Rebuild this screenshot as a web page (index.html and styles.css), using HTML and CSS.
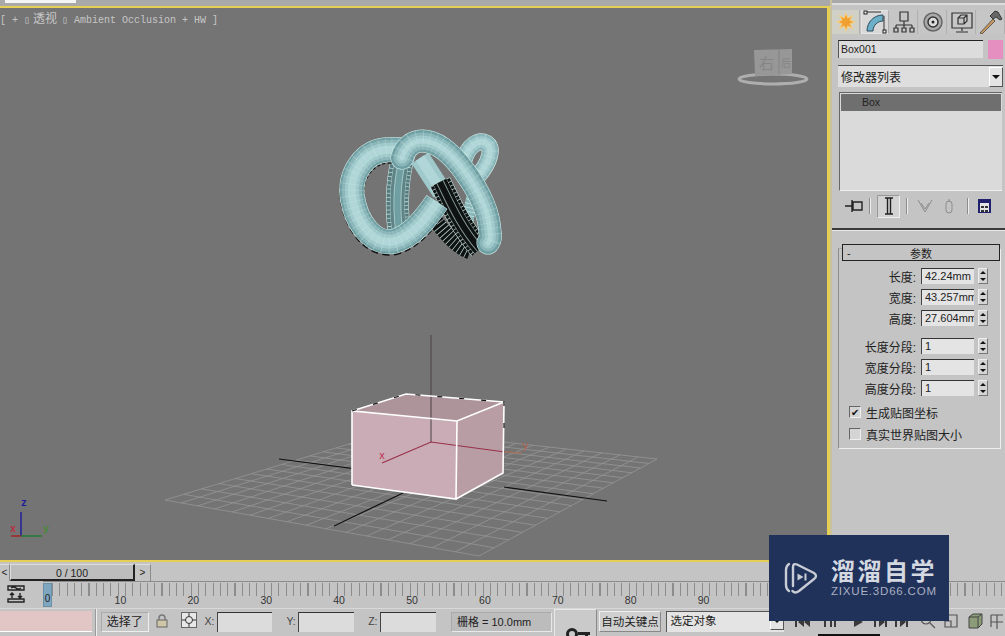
FILE: index.html
```html
<!DOCTYPE html>
<html lang="zh">
<head>
<meta charset="utf-8">
<title>3ds Max</title>
<link rel="stylesheet" href="styles.css">
</head>
<body>
<div class="app">
  <div class="main">
    <div class="viewport">
      <div class="vp-label">[ + ▯ <span class="vp-cn">透视</span> ▯ Ambient Occlusion + HW ]</div>
      <svg class="scene" viewBox="0 8 827 552" width="827" height="552">
        <defs>
          <path id="t1" d="M464 160C468 146 478 139 486 143C494 148 490 162 478 176"/>
          <path id="tm" d="M405 150C396 180 396 205 399 230"/>
          <path id="tt" d="M474 192C470 205 468 216 466 232"/>
          <path id="tp" d="M420 158L442 192"/>
          <path id="td" d="M440 182C450 202 460 226 480 249"/>
          <path id="te" d="M430 214C444 232 455 246 470 252"/>
          <path id="tl" d="M437 202C425 220 412 236 395 241C375 246 356 225 352 195C350 172 365 152 385 150C395 149 402 149 412 152"/>
          <path id="tf" d="M402 158C405 148 412 141 422 141C440 141 455 158 465 172C478 190 489 212 490 232C491 238 490 241 488 243"/>
        </defs>
        <g id="grid" class="grid"></g>
        <line class="axis" x1="279" y1="459" x2="352" y2="468.400"/>
        <line class="axis" x1="504" y1="487" x2="607" y2="501"/>
        <line class="axis" x1="334" y1="526" x2="403" y2="493"/>
        <polygon class="box-top" points="352,411 406,394 504,402 457,421"/>
        <polygon class="box-right" points="457,421 504,402 503,473 456,499"/>
        <polygon class="box-front" points="352,411 457,421 456,499 352,485"/>
        <line class="pivot" x1="431" y1="335" x2="431" y2="442"/>
        <polyline class="gizmo" points="382,463 431,442 505,452"/>
        <line class="gizmo-tip" x1="505" y1="452" x2="522" y2="453"/>
        <text class="gizmo-x" x="379" y="459">x</text>
        <text class="gizmo-y" x="522" y="449">y</text>
        <polyline class="box-wire" points="352,485 352,411 457,421 504,402"/>
        <polyline class="box-wire" points="457,421 456,499 352,485"/>
        <polyline class="box-wire" points="456,499 503,473 504,402"/>
        <polyline class="box-back" points="352,411 406,394 504,402"/>
        <polyline class="box-back-dash" points="352,411 406,394 504,402 504,430"/>
        <g class="knot">
          <use href="#t1" class="s-17 wire"/><use href="#t1" class="s-16 c1"/><use href="#t1" class="s-11 c2"/><use href="#t1" class="s-6 c3"/><use href="#t1" class="s-16 ring"/>
          <use href="#tt" class="s-12 c1"/><use href="#tt" class="s-12 ring-dense"/>
          <use href="#tm" class="s-23 wire"/><use href="#tm" class="s-22 cm"/><use href="#tm" class="s-12 c0"/><use href="#tm" class="s-22 ring-dense"/><use href="#tm" class="s-15 long"/><use href="#tm" class="s-14 cm-thin"/><use href="#tm" class="s-8 long"/><use href="#tm" class="s-6 c0-soft"/>
          <use href="#tp" class="s-20 c2"/><use href="#tp" class="s-10 c3"/>
          <use href="#te" class="s-15 dark"/><use href="#te" class="s-15 ring-dense"/>
          <use href="#td" class="s-22 wire"/><use href="#td" class="s-21 dark"/><use href="#td" class="s-21 ring-dense"/><use href="#td" class="s-15 long"/><use href="#td" class="s-14 dark-thin"/><use href="#td" class="s-8 long"/><use href="#td" class="s-6 dark-thin"/>
          <use href="#tl" class="s-25 edge" transform="translate(0 1.500)"/>
          <use href="#tl" class="s-25 wire"/><use href="#tl" class="s-24 c0"/><use href="#tl" class="s-20 c1"/><use href="#tl" class="s-14 c2"/><use href="#tl" class="s-8 c3"/><use href="#tl" class="s-24 ring"/>
          <use href="#tf" class="s-23 wire round"/><use href="#tf" class="s-22 c0 round"/><use href="#tf" class="s-17 c1 round"/><use href="#tf" class="s-11 c2 round"/><use href="#tf" class="s-5 c3 round"/><use href="#tf" class="s-22 ring"/>
        </g>
        <ellipse class="cube-ring" cx="773" cy="79" rx="34" ry="5"/>
        <polygon class="cube-face" points="754,50 792,49 792,74 755,76"/>
        <line class="cube-edge" x1="779" y1="49" x2="779" y2="75"/>
        <text class="cube-text" x="759" y="69">右</text>
        <text class="cube-text small" x="781" y="67">后</text>
        <line class="tri-z" x1="21" y1="536" x2="21" y2="512"/>
        <line class="tri-x" x1="11" y1="536" x2="21" y2="536"/>
        <line class="tri-y" x1="21" y1="536" x2="42" y2="536"/>
        <text class="tri-label z" x="21" y="506">z</text>
        <text class="tri-label x" x="10" y="532">x</text>
        <text class="tri-label y" x="43" y="532">y</text>
      </svg>
    </div>
    <aside class="panel">
      <div class="tabs">
        <div class="tab">
          <svg viewBox="0 0 20 20" width="20" height="20"><path class="sun" d="M10 1l1.800 5 4.700-2.500-2.500 4.700 5 1.800-5 1.800 2.500 4.700-4.700-2.500-1.800 5-1.800-5-4.700 2.500 2.500-4.700-5-1.800 5-1.800-2.500-4.700 4.700 2.500z"/></svg>
        </div>
        <div class="tab tab-on">
          <svg viewBox="0 0 24 24" width="24" height="24"><path class="arc" d="M4 21C4 12 11 5 20 5V11C15 11 10 15 10 21Z"/><path class="arc-line" d="M2 2H18M21 6V21"/><rect class="node" x="1" y="1" width="3" height="3"/><rect class="node" x="20" y="20" width="3" height="3"/></svg>
        </div>
        <div class="tab">
          <svg viewBox="0 0 24 24" width="24" height="24"><path class="ico-line" d="M8 2h8v9H8zM12 11v4M4 15h16M4 15v3M12 15v3M20 15v3M2 18h4v4H2zM10 18h4v4h-4zM18 18h4v4h-4z"/></svg>
        </div>
        <div class="tab">
          <svg viewBox="0 0 24 24" width="24" height="24"><circle class="ring-a" cx="12" cy="12" r="9"/><circle class="ring-b" cx="12" cy="12" r="5"/><circle class="ring-c" cx="12" cy="12" r="1.500"/></svg>
        </div>
        <div class="tab">
          <svg viewBox="0 0 24 24" width="24" height="24"><path class="ico-line" d="M2 3h20v15H2zM12 18v3M6 22h12M8 8l3-3h6v6l-3 3H8zM8 8h6v6M14 8l3-3"/></svg>
        </div>
        <div class="tab">
          <svg viewBox="0 0 24 24" width="24" height="24"><path class="handle" d="M1 23L14 9l2 2L3 24z"/><path class="hammer" d="M11 6l5-5 3 1 4 7-2 1-4-3-3 2z"/></svg>
        </div>
      </div>
      <div class="name-row">
        <div class="name-input">Box001</div>
        <div class="swatch"></div>
      </div>
      <div class="mod-select">
        <span>修改器列表</span>
        <span class="drop-btn"><i class="tri"></i></span>
      </div>
      <div class="stack">
        <div class="stack-row">Box</div>
      </div>
      <div class="stack-tools">
        <svg class="t-pin" viewBox="0 0 18 14" width="18" height="14"><path class="ico-dark" d="M0 7h7M7 1v12M8 3h9v8H8z"/></svg>
        <span class="t-sep"></span>
        <span class="t-active"><svg viewBox="0 0 10 18" width="10" height="18"><path class="ico-dark" d="M1 1h8M1 17h8M3.500 1v16M6.500 1v16"/></svg></span>
        <span class="t-sep"></span>
        <svg class="t-dim" viewBox="0 0 16 16" width="16" height="16"><path class="ico-dim" d="M1 2l7 12 7-12M4 5l4 6 4-6"/></svg>
        <svg class="t-dim2" viewBox="0 0 12 16" width="12" height="16"><path class="ico-dim" d="M6 1v3M3 6a3 3 0 016 0v6a3 3 0 01-6 0z"/></svg>
        <span class="t-sep last"></span>
        <svg class="t-cfg" viewBox="0 0 16 16" width="16" height="16"><path class="cfg-a" d="M1 1h13v14H1z"/><path class="cfg-b" d="M3 5h9v9H3z"/><path class="cfg-c" d="M8 8h3v2H8zM8 12h3v2H8zM4 8h3v2H4zM4 12h3v2H4z"/></svg>
      </div>
      <div class="rule"></div>
      <div class="rollup">
        <div class="roll-head"><span class="roll-minus">-</span><span class="roll-title">参数</span></div>
        <div class="fields">
          <div class="field"><label>长度:</label><span class="num">42.24mm</span><span class="spin"><i></i><i></i></span></div>
          <div class="field"><label>宽度:</label><span class="num">43.257mm</span><span class="spin"><i></i><i></i></span></div>
          <div class="field"><label>高度:</label><span class="num">27.604mm</span><span class="spin"><i></i><i></i></span></div>
        </div>
        <div class="fields second">
          <div class="field"><label>长度分段:</label><span class="num">1</span><span class="spin"><i></i><i></i></span></div>
          <div class="field"><label>宽度分段:</label><span class="num">1</span><span class="spin"><i></i><i></i></span></div>
          <div class="field"><label>高度分段:</label><span class="num">1</span><span class="spin"><i></i><i></i></span></div>
        </div>
        <div class="check"><span class="box checked">✔</span>生成贴图坐标</div>
        <div class="check lower"><span class="box"></span>真实世界贴图大小</div>
      </div>
    </aside>
  </div>
  <div class="bottom">
    <div class="slider-row">
      <span class="arrow-btn">&lt;</span>
      <span class="slider">0 / 100</span>
      <span class="arrow-btn wide">&gt;</span>
    </div>
    <div class="track-row">
      <svg class="curve-ico" viewBox="0 0 18 18" width="18" height="18"><path class="ico-dark" d="M1 1h16v4H1zM1 14h16v3H1zM5 13V8M3 10l2-2 2 2M13 8v5M11 11l2 2 2-2M4 3q3-2 5 0t5 0"/></svg>
      <div class="ruler">
        <div class="ticks"></div>
        <span class="frame">0</span>
        <div class="nums">
          <span>10</span><span>20</span><span>30</span><span>40</span><span>50</span><span>60</span><span>70</span><span>80</span><span>90</span>
        </div>
      </div>
    </div>
    <div class="status-row">
      <div class="pink"></div>
      <div class="divider"></div>
      <div class="sel-btn">选择了</div>
      <svg class="lock" viewBox="0 0 12 14" width="12" height="14"><path class="lock-arc" d="M3 6V4a3 3 0 016 0v2"/><rect class="lock-body" x="1" y="6" width="10" height="7"/></svg>
      <svg class="target" viewBox="0 0 16 16" width="16" height="16"><rect class="target-bg" x="0.500" y="0.500" width="15" height="15"/><circle class="target-c" cx="8" cy="8" r="3.500"/><path class="target-c" d="M8 1v3.500M8 11.500V15M1 8h3.500M11.500 8H15"/></svg>
      <span class="xyz first">X:</span><span class="coord"></span>
      <span class="xyz">Y:</span><span class="coord"></span>
      <span class="xyz">Z:</span><span class="coord"></span>
      <div class="grid-box">栅格 = 10.0mm</div>
      <div class="key-btn"><svg viewBox="0 0 26 14" width="26" height="14"><path class="key" d="M8 1a6 6 0 100 12A6 6 0 008 1zM8 4a3 3 0 110 6 3 3 0 010-6zM14 5h12v3h-2v3h-3V8h-7z"/></svg></div>
      <div class="auto-btn">自动关键点</div>
      <div class="sel-drop"><span>选定对象</span><span class="drop-btn small"><i class="tri"></i></span></div>
      <svg class="play" viewBox="0 0 116 14" width="116" height="14">
        <path class="play-i" d="M1 2h2v10H1zM10 2L4 7l6 5zM16 2l-6 5 6 5zM30 2h2v10h-2zM36 2h2v10h-2zM40 2h2v10h-2zM60 2l9 5-9 5zM80 2h2v10h-2zM85 2l6 5-6 5zM91 2h2v10h-2zM101 2h2v10h-2zM106 2l6 5-6 5zM112 2h2v10h-2z"/>
      </svg>
      <svg class="nav" viewBox="0 0 86 18" width="86" height="18">
        <circle class="nav-l" cx="7" cy="7" r="5"/><path class="nav-l" d="M11 11l5 5M26 3h12v12H26zM26 9h6v6"/>
        <path class="nav-g" d="M50 5l4-3h9v10l-4 4h-9zM50 5h9v11M59 5l4-3"/>
        <path class="nav-l" d="M72 3h12M72 3v12M78 3v14M72 10h12"/>
      </svg>
    </div>
  </div>
  <div class="time-strip"></div>
  <div class="watermark">
    <svg class="wm-logo" viewBox="0 0 34 34" width="34" height="34">
      <path class="wm-stroke" d="M5 3Q2 5 2 9V24Q2 28 5 30"/>
      <path class="wm-stroke" d="M9 25V6Q9 2 13 3.500L30 12Q34 15 30 18L15 30Q11 33 8.500 30"/>
      <path class="wm-fill" d="M13.500 12.500l6 3.500-6 3.500zM20.500 12.500h2v7h-2z"/>
    </svg>
    <div class="wm-text">
      <div class="wm-cn">溜溜自学</div>
      <div class="wm-en">ZIXUE.3D66.COM</div>
    </div>
  </div>
</div>
<script src="grid.js"></script>
</body>
</html>
```

FILE: styles.css
```css
* { box-sizing: border-box; }
html, body { margin: 0; padding: 0; }
body { background: #c4c4c4; font-family: "Liberation Sans", "Noto Sans CJK SC", sans-serif; color: #222; }
.app { position: relative; width: 1005px; height: 636px; overflow: hidden; display: flex; flex-direction: column; background: #c4c4c4; }
.main { display: flex; height: 562px; flex: none; }

/* viewport */
.viewport { position: relative; width: 830px; height: 556px; margin-top: 6px; background: #747474; border-top: 2px solid #e6cf55; border-right: 3px solid #e6cf55; border-bottom: 2px solid #e6cf55; box-shadow: 0 -6px 0 #a9a9a9; }
.viewport::before { content: ""; position: absolute; left: 5px; top: -8px; width: 71px; height: 3px; background: #f4f4f4; }
.vp-label { position: absolute; left: 0; top: 1px; font: 10px "Liberation Mono", "Noto Sans CJK SC", monospace; color: #c6c6c6; white-space: pre; }
.vp-cn { font-size: 12px; margin: 0 -1px 0 -3px; }
.scene { display: block; }
.grid line { stroke: #969696; stroke-width: 0.8; }
.axis { stroke: #111; stroke-width: 1.2; }
.box-top { fill: #ad939a; }
.box-right { fill: #b89da4; }
.box-front { fill: #c9acb5; }
.box-wire { fill: none; stroke: #fff; stroke-width: 1.6; }
.box-back { fill: none; stroke: #fff; stroke-width: 1.4; }
.box-back-dash { fill: none; stroke: #111; stroke-width: 1.2; stroke-dasharray: 5 17; }
.pivot { stroke: #4c4146; stroke-width: 1; }
.gizmo { fill: none; stroke: #99304a; stroke-width: 1.2; }
.gizmo-tip { stroke: #a0705c; stroke-width: 1.4; }
.gizmo-x { font: 10px "Liberation Mono", monospace; fill: #c02a4a; }
.gizmo-y { font: 11px "Liberation Mono", monospace; fill: #b0604a; }
.knot { filter: blur(0.4px); }
.knot use { fill: none; stroke-linecap: butt; }
.knot use.round { stroke-linecap: round; }
.s-25 { stroke-width: 25; } .s-24 { stroke-width: 24; } .s-23 { stroke-width: 23; } .s-22 { stroke-width: 22; } .s-21 { stroke-width: 21; }
.s-20 { stroke-width: 20; } .s-17 { stroke-width: 17; } .s-16 { stroke-width: 16; }
.s-15 { stroke-width: 15; } .s-14 { stroke-width: 14; } .s-12 { stroke-width: 12; }
.s-11 { stroke-width: 11; } .s-10 { stroke-width: 10; } .s-8 { stroke-width: 8; } .s-6 { stroke-width: 6; } .s-5 { stroke-width: 5; }
.wire { stroke: #d7f2ee; }
.edge { stroke: #111; stroke-dasharray: 5 3; }
.c0 { stroke: #6f9fa3; }
.c1 { stroke: #8ab6b9; }
.c2 { stroke: #9fc9cb; }
.c3 { stroke: #b0d6d7; }
.cm { stroke: #55797c; }
.cm-thin { stroke: #5e8487; }
.c0-soft { stroke: #6f9fa3; }
.dark { stroke: #0e1212; }
.dark-thin { stroke: #0e1212; }
.ring { stroke: #d7f2ee; stroke-opacity: 0.28; stroke-dasharray: 0.8 5; }
.ring-dense { stroke: #d4f0ea; stroke-opacity: 0.8; stroke-dasharray: 0.8 3.200; }
.long { stroke: #d4f0ea; stroke-opacity: 0.6; }
.cube-ring { fill: none; stroke: #aeaeae; stroke-width: 3; }
.cube-face { fill: #979797; }
.cube-edge { stroke: #838383; stroke-width: 1; }
.cube-text { font: 15px "Noto Sans CJK SC", sans-serif; fill: #858585; }
.cube-text.small { font-size: 10px; }
.tri-z { stroke: #1c1c9c; stroke-width: 1.4; }
.tri-x { stroke: #a82020; stroke-width: 1.4; }
.tri-y { stroke: #1c7c2c; stroke-width: 1.4; }
.tri-label { font: bold 10px "Liberation Mono", monospace; }
.tri-label.z { fill: #1c1c9c; }
.tri-label.x { fill: #b83040; }
.tri-label.y { fill: #4a8a3a; }

/* command panel */
.panel { width: 175px; height: 562px; padding-top: 10px; background: #c4c4c4; border-left: 2px solid #c9c29c; box-shadow: inset 0 3px 0 #a9a9a9, inset 0 5px 0 #dcdcdc; }
.tabs { display: flex; height: 24px; padding-left: 0; gap: 1px; }
.tab { width: 28px; height: 24px; display: flex; align-items: center; justify-content: center; border-right: 1px solid #b0b0b0; background: #c6c6c6; }
.tab:first-child { background: #d0d0c6; }
.tab-on { background: #d8d8d8; border: 1px solid #e4e4e4; border-right-color: #aaa; }
.sun { fill: #f0a030; stroke: #f8d080; stroke-width: 1; }
.arc { fill: #6cb0c8; stroke: #2a4a60; stroke-width: 1; }
.arc-line { fill: none; stroke: #333; stroke-width: 1; }
.node { fill: #eee; stroke: #222; stroke-width: 1; }
.ico-line { fill: none; stroke: #333; stroke-width: 1.2; }
.ring-a { fill: #aaa; stroke: #666; stroke-width: 1.5; }
.ring-b { fill: #ddd; stroke: #333; stroke-width: 1.5; }
.ring-c { fill: #222; }
.handle { fill: #c89860; stroke: #444; stroke-width: 0.8; }
.hammer { fill: #666; stroke: #222; stroke-width: 0.8; }
.name-row { display: flex; margin: 6px 0 0 6px; gap: 5px; }
.name-input { width: 145px; height: 18px; padding: 2px 0 0 2px; font-size: 10.5px; background: #dcdcdc; border-top: 1px solid #222; border-left: 1px solid #555; }
.swatch { width: 15px; height: 19px; background: #e48fc0; }
.mod-select { display: flex; justify-content: space-between; align-items: center; width: 165px; height: 22px; margin: 6px 0 0 6px; padding-left: 3px; font-size: 12px; background: #dedede; border-top: 1px solid #555; }
.drop-btn { width: 14px; height: 20px; display: flex; align-items: center; justify-content: center; background: #e4e4e4; border: 1px solid #fff; border-right-color: #555; border-bottom-color: #555; }
.tri { width: 0; height: 0; border-left: 4px solid transparent; border-right: 4px solid transparent; border-top: 4px solid #111; }
.stack { width: 163px; height: 99px; margin: 5px 0 0 7px; padding: 1px; background: #dadada; border-left: 1px solid #666; border-top: 1px solid #666; border-bottom: 1px solid #f0f0f0; }
.stack-row { height: 17px; padding: 2px 0 0 21px; font-size: 10.5px; color: #222; background: #6f6f6f; }
.stack-tools { display: flex; align-items: center; height: 24px; margin-top: 3px; padding-left: 13px; }
.t-sep { width: 2px; height: 16px; margin: 0 6px; background: #8c8c8c; border-right: 1px solid #eee; }
.t-sep.last { margin: 0 8px 0 12px; }
.t-active { width: 23px; height: 23px; display: flex; align-items: center; justify-content: center; background: #d2d2d2; border: 1px solid #eee; border-color: #999 #eee #eee #999; }
.t-dim { margin-left: 3px; }
.t-dim2 { margin-left: 10px; }
.ico-dark { fill: none; stroke: #222; stroke-width: 1.4; }
.ico-dim { fill: none; stroke: #8c8c8c; stroke-width: 1; }
.cfg-a { fill: #20206c; }
.cfg-b { fill: #e4e4e4; }
.cfg-c { fill: #333; }
.rule { height: 3px; margin-top: 10px; background: #3a3a3a; border-bottom: 1px solid #e8e8e8; }
.rollup { position: relative; width: 163px; height: 201px; margin: 17px 0 0 6px; padding-top: 15px; border: 1px solid #8c8c8c; border-top: 1px solid #aaa; border-right-color: #eee; border-bottom-color: #eee; }
.roll-head { position: absolute; left: 3px; top: -5px; width: 158px; height: 17px; display: flex; align-items: center; font-size: 11px; background: #c4c4c4; border: 1px solid #222; }
.roll-minus { width: 12px; padding-left: 4px; }
.roll-title { flex: 1; text-align: center; padding-right: 12px; }
.fields { margin-top: 4px; display: flex; flex-direction: column; gap: 5px; }
.fields.second { margin-top: 12px; }
.field { display: flex; align-items: center; height: 16px; }
.field label { width: 77px; text-align: right; font-size: 12px; white-space: nowrap; }
.num { width: 53px; height: 16px; margin-left: 5px; padding: 1px 0 0 3px; overflow: hidden; font-size: 11px; white-space: nowrap; background: #e4e4e4; border-top: 1px solid #333; border-left: 1px solid #444; }
.spin { width: 10px; height: 16px; margin-left: 4px; display: flex; flex-direction: column; align-items: center; justify-content: space-around; background: #d4d4d4; border: 1px solid #eee; border-right-color: #777; border-bottom-color: #777; }
.spin i { width: 0; height: 0; border-left: 3px solid transparent; border-right: 3px solid transparent; border-bottom: 3px solid #111; }
.spin i + i { border-bottom: 0; border-top: 3px solid #111; }
.check { display: flex; align-items: center; height: 14px; margin: 9px 0 0 10px; font-size: 12px; white-space: nowrap; }
.check.lower { margin-top: 8px; }
.box { width: 12px; height: 12px; margin-right: 5px; display: flex; align-items: center; justify-content: center; font-size: 10px; color: #111; background: #d4d4d4; border: 1px solid #eee; border-color: #666 #eee #eee #666; }

/* bottom */
.bottom { flex: none; height: 74px; border-top: 0; }
.slider-row { display: flex; height: 19px; padding-top: 2px; }
.arrow-btn { width: 10px; height: 17px; text-align: center; font-size: 10px; line-height: 16px; border-right: 1px solid #8a8a8a; border-top: 1px solid #ddd; }
.arrow-btn.wide { width: 16px; }
.slider { width: 125px; height: 17px; text-align: center; font-size: 10.5px; line-height: 16px; background: #bdbdbd; border: 1px solid #ddd; border-right: 2px solid #222; border-bottom: 2px solid #222; }
.track-row { display: flex; height: 27px; }
.curve-ico { margin: 4px 0 0 7px; flex: none; }
.ruler { position: relative; flex: 1; margin-left: 18px; border-top: 1px solid #8a8a8a; }
.ticks { position: absolute; left: 9px; top: 1px; right: 0; height: 13px; background: repeating-linear-gradient(90deg, #8c8c8c 0 1px, transparent 1px 7.300px); }
.frame { position: absolute; left: 0; top: 1px; width: 9px; height: 24px; padding-top: 9px; text-align: center; font-size: 10px; background: #7fa6bf; border: 1px solid #6b90aa; }
.nums { position: absolute; left: 41px; top: 12px; display: flex; }
.nums span { flex: 0 0 72.900px; width: 72.900px; text-align: center; font-size: 10.500px; color: #333; }
.status-row { display: flex; align-items: flex-start; height: 28px; overflow: hidden; border-top: 1px solid #d8d8d8; }
.pink { width: 92px; height: 21px; margin-top: 2px; background: #e2c5c5; border-bottom: 1px solid #fff; }
.divider { width: 2px; height: 27px; margin-left: 3px; background: #999; border-right: 1px solid #eee; }
.sel-btn { width: 48px; height: 20px; margin: 3px 0 0 4px; text-align: center; font-size: 12px; line-height: 18px; background: #c8c8c8; border: 1px solid #aaa; border-right-color: #eee; border-bottom-color: #eee; }
.lock { margin: 5px 0 0 7px; flex: none; }
.lock-arc { fill: none; stroke: #777; stroke-width: 1.4; }
.lock-body { fill: #cfc6a8; stroke: #666; stroke-width: 1; }
.target { margin: 3px 0 0 13px; flex: none; }
.target-bg { fill: #e8e8e8; stroke: #666; }
.target-c { fill: none; stroke: #333; stroke-width: 1; }
.xyz { width: 12px; margin: 6px 0 0 14px; font-size: 10.500px; color: #444; }
.xyz.first { margin-left: 8px; }
.coord { width: 56px; height: 20px; margin-top: 3px; background: #dcdcdc; border-top: 1px solid #333; border-left: 1px solid #444; }
.grid-box { width: 101px; height: 20px; margin: 3px 0 0 15px; padding-left: 5px; font-size: 11px; line-height: 18px; white-space: nowrap; background: #bcbcbc; border: 1px solid #aaa; border-right-color: #e8e8e8; border-bottom-color: #e8e8e8; }
.key-btn { width: 43px; height: 28px; margin-left: 2px; padding: 17px 0 0 9px; background: #cacaca; border: 1px solid #e8e8e8; border-right-color: #888; }
.key { fill: #222; fill-rule: evenodd; }
.auto-btn { width: 63px; height: 21px; margin: 2px 0 0 2px; text-align: center; font-size: 11.500px; line-height: 20px; white-space: nowrap; background: #d0d0d0; border: 1px solid #eee; border-right-color: #888; border-bottom-color: #888; }
.sel-drop { display: flex; justify-content: space-between; width: 118px; height: 21px; margin: 2px 0 0 5px; padding-left: 3px; font-size: 11.500px; line-height: 19px; background: #e4e4e4; border-top: 1px solid #555; border-left: 1px solid #555; }
.drop-btn.small { height: 18px; }
.play { margin: 6px 0 0 10px; flex: none; }
.play-i { fill: #3a3a3a; }
.nav { margin: 3px 0 0 9px; flex: none; }
.nav-l { fill: none; stroke: #555; stroke-width: 1.200; }
.nav-g { fill: #8c9c78; stroke: #444; stroke-width: 1; }

/* overlays */
.time-strip { position: absolute; left: 818px; top: 634px; width: 62px; height: 2px; background: #111; }
.watermark { position: absolute; left: 769px; top: 535px; width: 180px; height: 86px; display: flex; align-items: center; padding-left: 15px; gap: 13px; background: #20315a; }
.wm-stroke { fill: none; stroke: #c8ccd4; stroke-width: 2.400; stroke-linejoin: round; stroke-linecap: round; }
.wm-fill { fill: #c8ccd4; }
.wm-text { display: flex; flex-direction: column; gap: 0; margin-bottom: 3px; }
.wm-cn { font: bold 24px/28px "Noto Sans CJK SC", sans-serif; letter-spacing: 2.500px; color: #d4d8e0; white-space: nowrap; }
.wm-en { font: 11.500px/14px "Liberation Sans", sans-serif; letter-spacing: 0.800px; color: #a9b0c0; white-space: nowrap; }
```

FILE: grid.js
```js
(function () {
  var NS = "http://www.w3.org/2000/svg";
  var L = [165, 500], T = [395, 430], R = [657, 459], B = [479, 556];
  var N = 16;
  var dx1 = T[0] - R[0], dx2 = B[0] - R[0], sx = L[0] - T[0] + R[0] - B[0];
  var dy1 = T[1] - R[1], dy2 = B[1] - R[1], sy = L[1] - T[1] + R[1] - B[1];
  var det = dx1 * dy2 - dx2 * dy1;
  var g = (sx * dy2 - dx2 * sy) / det;
  var h = (dx1 * sy - sx * dy1) / det;
  var a = T[0] - L[0] + g * T[0], b = B[0] - L[0] + h * B[0], c = L[0];
  var d = T[1] - L[1] + g * T[1], e = B[1] - L[1] + h * B[1], f = L[1];
  function p(u, v) {
    var w = g * u + h * v + 1;
    return [(a * u + b * v + c) / w, (d * u + e * v + f) / w];
  }
  var group = document.getElementById("grid");
  function add(p1, p2) {
    var l = document.createElementNS(NS, "line");
    l.setAttribute("x1", p1[0]); l.setAttribute("y1", p1[1]);
    l.setAttribute("x2", p2[0]); l.setAttribute("y2", p2[1]);
    group.appendChild(l);
  }
  for (var i = 0; i <= N; i++) {
    add(p(i / N, 0), p(i / N, 1));
    add(p(0, i / N), p(1, i / N));
  }
})();
```
